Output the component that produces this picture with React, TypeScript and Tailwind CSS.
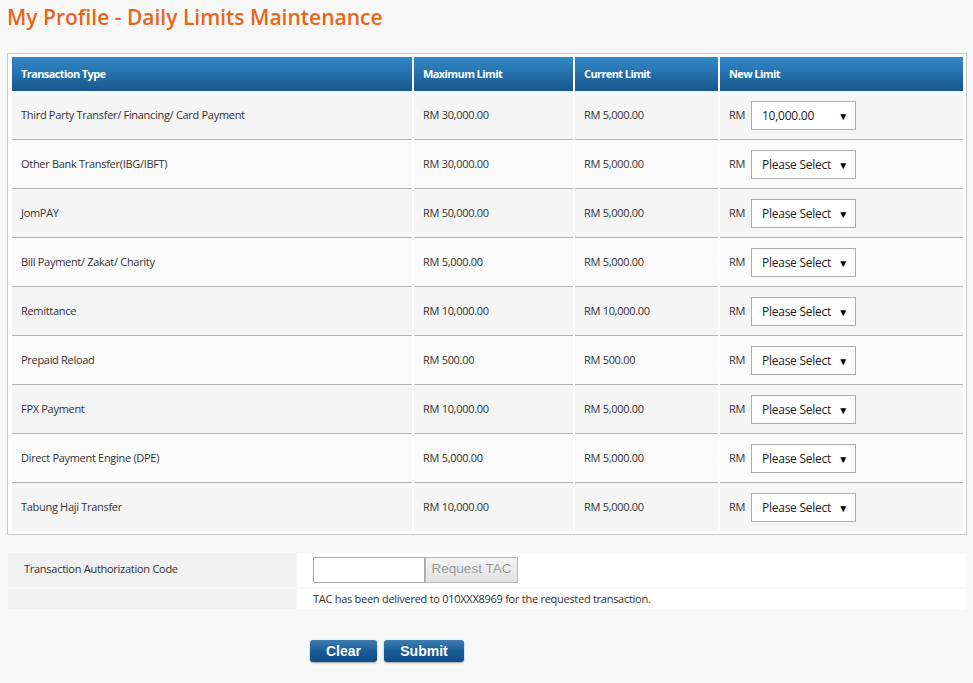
import React from "react";

const rows = [
  { type: "Third Party Transfer/ Financing/ Card Payment", max: "RM 30,000.00", cur: "RM 5,000.00", sel: "10,000.00" },
  { type: "Other Bank Transfer(IBG/IBFT)", max: "RM 30,000.00", cur: "RM 5,000.00", sel: "Please Select" },
  { type: "JomPAY", max: "RM 50,000.00", cur: "RM 5,000.00", sel: "Please Select" },
  { type: "Bill Payment/ Zakat/ Charity", max: "RM 5,000.00", cur: "RM 5,000.00", sel: "Please Select" },
  { type: "Remittance", max: "RM 10,000.00", cur: "RM 10,000.00", sel: "Please Select" },
  { type: "Prepaid Reload", max: "RM 500.00", cur: "RM 500.00", sel: "Please Select" },
  { type: "FPX Payment", max: "RM 10,000.00", cur: "RM 5,000.00", sel: "Please Select" },
  { type: "Direct Payment Engine (DPE)", max: "RM 5,000.00", cur: "RM 5,000.00", sel: "Please Select" },
  { type: "Tabung Haji Transfer", max: "RM 10,000.00", cur: "RM 5,000.00", sel: "Please Select" },
];

export default function App() {
  const body = "font-['Open_Sans',sans-serif]";
  return (
    <div className={`min-h-[683px] w-[973px] bg-[#f8f8f8] text-[#333] ${body}`}>
      <h1 className="pl-[7px] pt-[5px] text-[21px] leading-[25px] font-semibold text-[#e9651a]">
        My Profile - Daily Limits Maintenance
      </h1>

      <div className="ml-[7px] mt-[23px] w-[960px] border border-[#c9c9c9] bg-white pl-[2px] pt-[3px] pb-[3px]">
        <table className="table-fixed border-separate border-spacing-x-[2px] border-spacing-y-0 w-[955px] text-[11px] tracking-[-0.3px]">
          <colgroup>
            <col className="w-[400px]" />
            <col className="w-[159px]" />
            <col className="w-[143px]" />
            <col className="w-[243px]" />
          </colgroup>
          <thead>
            <tr className="h-[34px]">
              {["Transaction Type", "Maximum Limit", "Current Limit", "New Limit"].map((h) => (
                <th
                  key={h}
                  className="bg-gradient-to-b from-[#318ac8] to-[#19578d] px-[9px] text-left font-bold text-white tracking-[-0.6px]"
                >
                  {h}
                </th>
              ))}
            </tr>
          </thead>
          <tbody>
            {rows.map((r, i) => {
              const bg = i % 2 === 0 ? "bg-[#f5f5f5]" : "bg-[#fbfbfb]";
              const last = i === rows.length - 1;
              const cell = `${bg} px-[9px] ${last ? "h-[48px]" : "h-[49px] border-b border-[#b3b3b3]"} align-middle`;
              return (
                <tr key={r.type}>
                  <td className={cell}>{r.type}</td>
                  <td className={cell}>{r.max}</td>
                  <td className={cell}>{r.cur}</td>
                  <td className={cell}>
                    <div className="flex items-center">
                      <span className="w-[22px]">RM</span>
                      <div className="flex h-[29px] w-[105px] items-center justify-between border border-[#acacac] bg-white pl-[10px] pr-[7px] pt-[1px] text-[12px] tracking-[-0.25px] text-[#222]">
                        <span>{r.sel}</span>
                        <span className="text-[10px] leading-none text-black">▼</span>
                      </div>
                    </div>
                  </td>
                </tr>
              );
            })}
          </tbody>
        </table>
      </div>

      <div className="ml-[8px] mt-[18px] flex w-[957px] flex-col gap-[2px] text-[11px] tracking-[-0.27px]">
        <div className="flex h-[34px] gap-[2px]">
          <div className="flex w-[288px] items-center bg-[#f1f1f1] pl-[16px] pb-[2px]">Transaction Authorization Code</div>
          <div className="flex flex-1 items-center bg-white pl-[15px]">
            <input className="h-[26px] w-[112px] border border-[#a8a8a8] bg-white outline-none" />
            <button className="h-[26px] w-[93px] border border-[#b9b9b9] bg-gradient-to-b from-[#f4f4f4] to-[#e2e2e2] pb-[1px] font-['Liberation_Sans',sans-serif] text-[13.5px] tracking-normal text-[#9a9a9a]">
              Request TAC
            </button>
          </div>
        </div>
        <div className="flex h-[20px] gap-[2px]">
          <div className="w-[288px] bg-[#f1f1f1]" />
          <div className="flex flex-1 items-center bg-white pl-[15px]">
            TAC has been delivered to 010XXX8969 for the requested transaction.
          </div>
        </div>
      </div>

      <div className="ml-[310px] mt-[31px] flex gap-[7px] font-['Liberation_Sans',sans-serif] text-[14px] font-bold text-white">
        <button className="h-[22px] w-[67px] rounded-[3px] bg-gradient-to-b from-[#3f7db3] via-[#1a5d99] to-[#0d4b86] shadow-[0_1px_2px_rgba(0,0,0,0.35)]">
          Clear
        </button>
        <button className="h-[22px] w-[80px] rounded-[3px] bg-gradient-to-b from-[#3f7db3] via-[#1a5d99] to-[#0d4b86] shadow-[0_1px_2px_rgba(0,0,0,0.35)]">
          Submit
        </button>
      </div>
    </div>
  );
}
